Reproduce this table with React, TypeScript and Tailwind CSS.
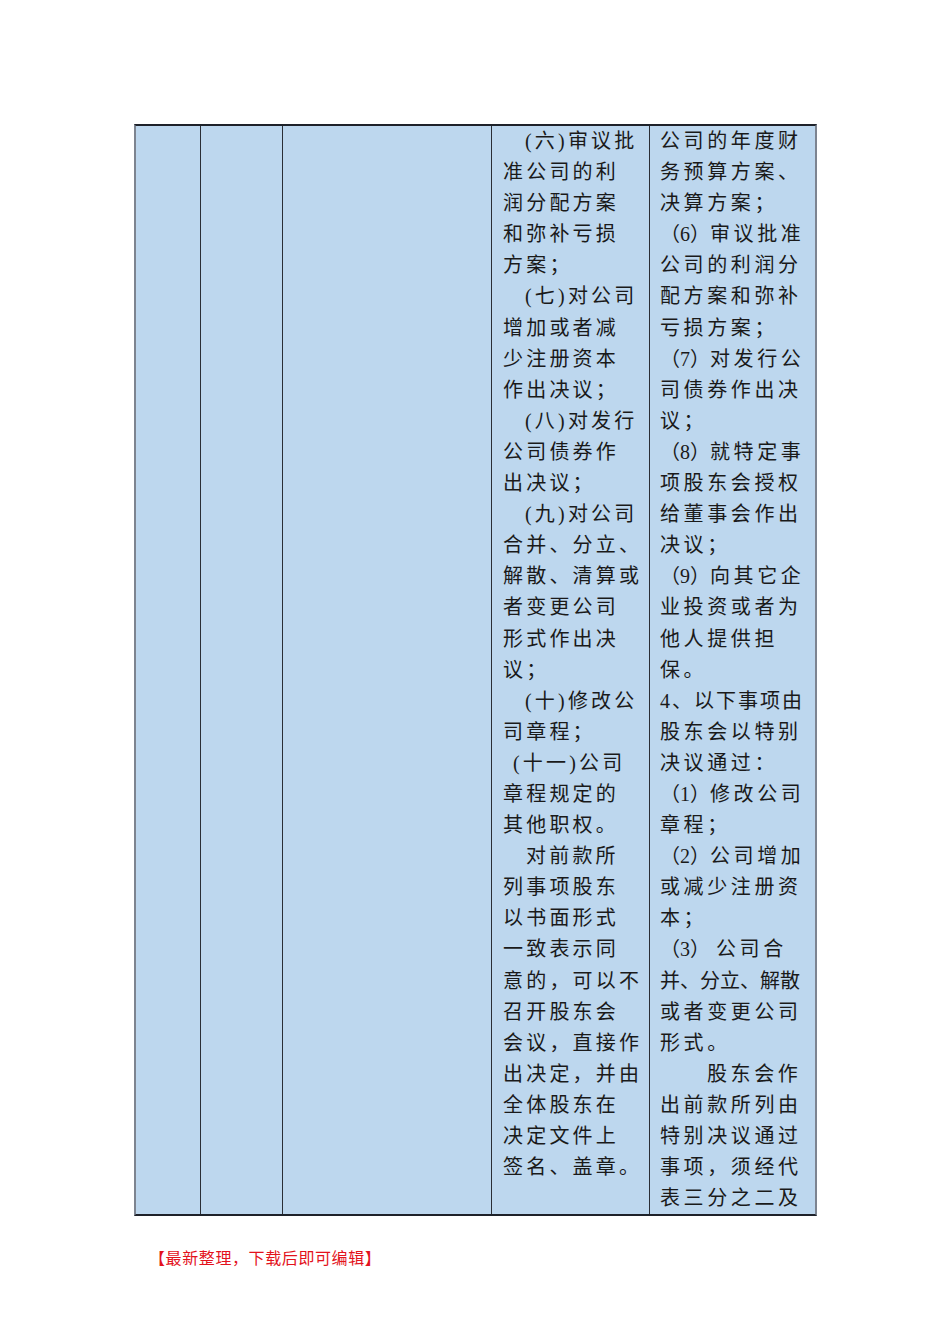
import React from "react";

const L = ({ children, className = "" }: { children?: React.ReactNode; className?: string }) => (
  <div className={"whitespace-nowrap h-[31.1px] leading-[31.1px] " + className}>{children}</div>
);

const P = ({ children }: { children: React.ReactNode }) => (
  <span className="tracking-[0px]">{children}</span>
);

export default function App() {
  return (
    <div
      className="w-[950px] h-[1344px] bg-white pt-[124px] pl-[134px]"
      style={{ fontFamily: '"Liberation Serif", "Noto Sans CJK SC", serif' }}
    >
      <div className="flex w-[683px] bg-[#bdd7ee] border-t-2 border-b-2 border-t-[#1e222a] border-b-[#1e222a] border-l-2 border-r-2 border-l-[#7d8490] border-r-[#7d8490] text-[20px] text-[#1a1a1a]">
        <div className="w-[65px] border-r border-r-[#2a2e36]" />
        <div className="w-[82px] border-r border-r-[#2a2e36]" />
        <div className="w-[209px] border-r border-r-[#2a2e36]" />
        <div className="w-[158px] border-r border-r-[#2a2e36] pl-[11px] tracking-[3.2px]">
          <L className="pl-[22px]">(六)审议批</L>
          <L>准公司的利</L>
          <L>润分配方案</L>
          <L>和弥补亏损</L>
          <L>方案；</L>
          <L className="pl-[22px]">(七)对公司</L>
          <L>增加或者减</L>
          <L>少注册资本</L>
          <L>作出决议；</L>
          <L className="pl-[22px]">(八)对发行</L>
          <L>公司债券作</L>
          <L>出决议；</L>
          <L className="pl-[22px]">(九)对公司</L>
          <L>合并、分立、</L>
          <L>解散、清算或</L>
          <L>者变更公司</L>
          <L>形式作出决</L>
          <L>议；</L>
          <L className="pl-[22px]">(十)修改公</L>
          <L>司章程；</L>
          <L className="pl-[10px]">(十一)公司</L>
          <L>章程规定的</L>
          <L>其他职权。</L>
          <L className="pl-[23px]">对前款所</L>
          <L>列事项股东</L>
          <L>以书面形式</L>
          <L>一致表示同</L>
          <L>意的，可以不</L>
          <L>召开股东会</L>
          <L>会议，直接作</L>
          <L>出决定，并由</L>
          <L>全体股东在</L>
          <L>决定文件上</L>
          <L>签名、盖章。</L>
        </div>
        <div className="w-[165px] pl-[10px] tracking-[3.6px]">
          <L>公司的年度财</L>
          <L>务预算方案、</L>
          <L>决算方案；</L>
          <L><P>（6）</P>审议批准</L>
          <L>公司的利润分</L>
          <L>配方案和弥补</L>
          <L>亏损方案；</L>
          <L><P>（7）</P>对发行公</L>
          <L>司债券作出决</L>
          <L>议；</L>
          <L><P>（8）</P>就特定事</L>
          <L>项股东会授权</L>
          <L>给董事会作出</L>
          <L>决议；</L>
          <L><P>（9）</P>向其它企</L>
          <L>业投资或者为</L>
          <L>他人提供担</L>
          <L>保。</L>
          <L className="tracking-[2px]">4、以下事项由</L>
          <L>股东会以特别</L>
          <L>决议通过：</L>
          <L><P>（1）</P>修改公司</L>
          <L>章程；</L>
          <L><P>（2）</P>公司增加</L>
          <L>或减少注册资</L>
          <L>本；</L>
          <L><P>（3）</P><span className="pl-[6px]">公司合</span></L>
          <L className="tracking-[0px]">并、分立、解散</L>
          <L>或者变更公司</L>
          <L>形式。</L>
          <L className="pl-[47px]">股东会作</L>
          <L>出前款所列由</L>
          <L>特别决议通过</L>
          <L>事项，须经代</L>
          <L>表三分之二及</L>
        </div>
      </div>
      <div
        className="mt-[31px] ml-[15px] text-[16px] tracking-[0.6px] leading-[20px] text-[#e3121c]"
        style={{ fontFamily: '"Noto Sans CJK SC", sans-serif' }}
      >
        【最新整理，下载后即可编辑】
      </div>
    </div>
  );
}
